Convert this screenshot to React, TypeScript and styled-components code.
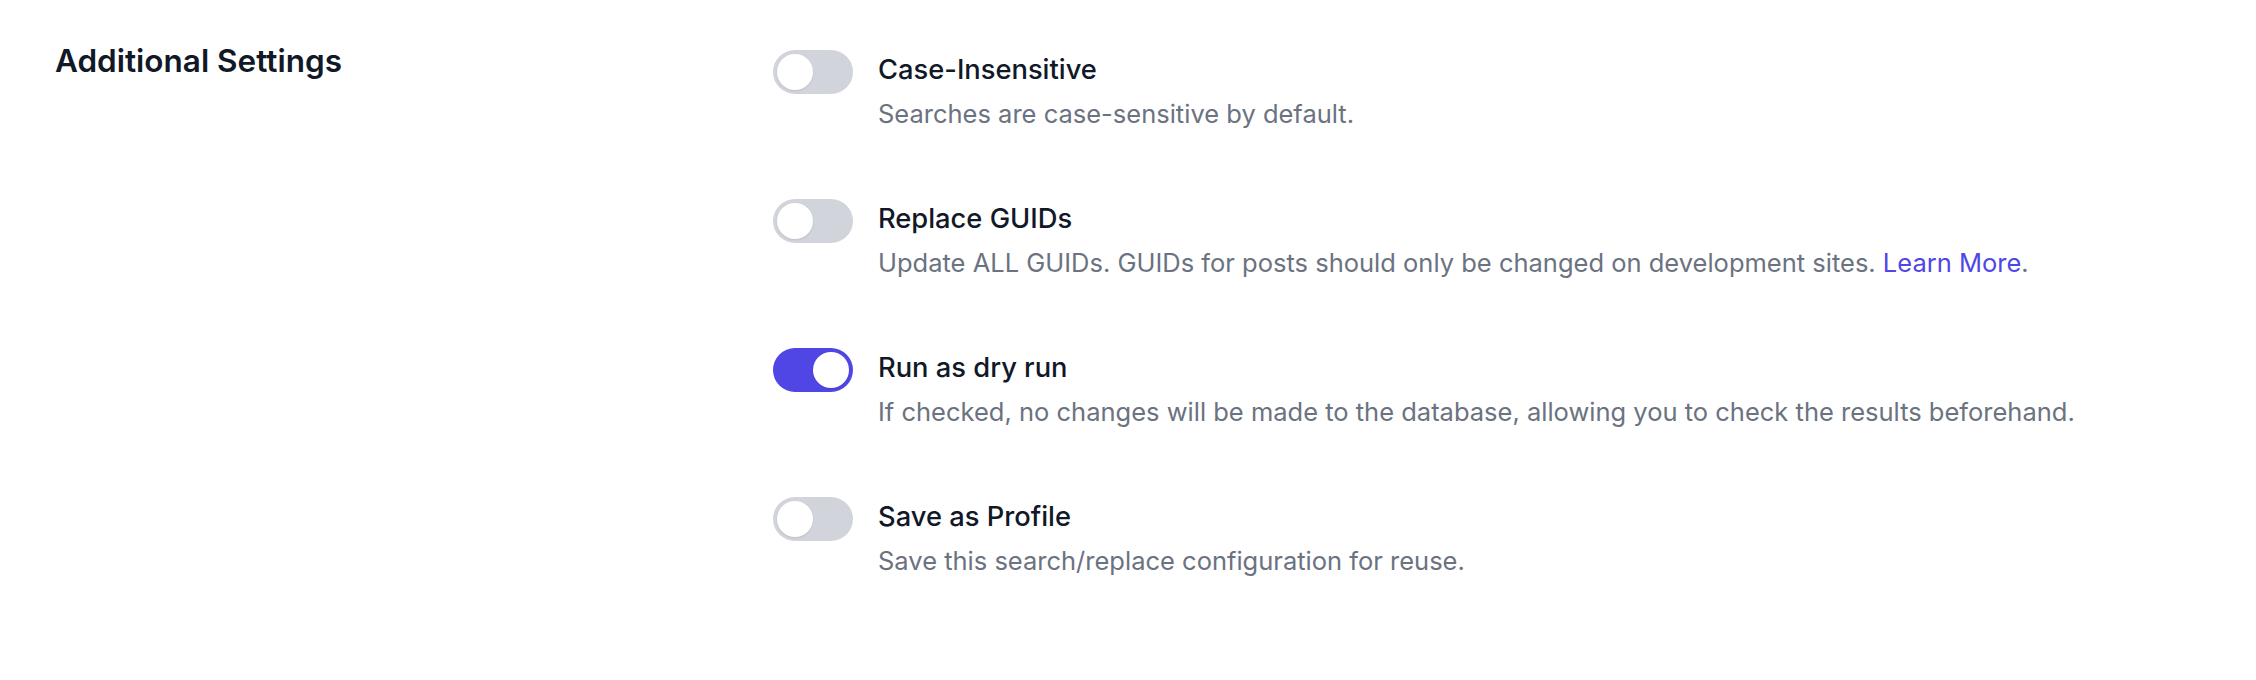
import React, { useState } from "react";
import styled, { createGlobalStyle } from "styled-components";

const GlobalStyle = createGlobalStyle`
  html, body {
    margin: 0;
    padding: 0;
    background: #ffffff;
  }
  body {
    font-family: Inter, "Noto Sans", "Liberation Sans", sans-serif;
    -webkit-font-smoothing: antialiased;
  }
`;

type Setting = {
  id: string;
  title: string;
  description: string;
  link?: string;
  enabled: boolean;
};

const initialSettings: Setting[] = [
  {
    id: "case",
    title: "Case-Insensitive",
    description: "Searches are case-sensitive by default.",
    enabled: false,
  },
  {
    id: "guids",
    title: "Replace GUIDs",
    description:
      "Update ALL GUIDs. GUIDs for posts should only be changed on development sites.",
    link: "Learn More",
    enabled: false,
  },
  {
    id: "dry",
    title: "Run as dry run",
    description:
      "If checked, no changes will be made to the database, allowing you to check the results beforehand.",
    enabled: true,
  },
  {
    id: "profile",
    title: "Save as Profile",
    description: "Save this search/replace configuration for reuse.",
    enabled: false,
  },
];

const App = () => {
  const [settings, setSettings] = useState<Setting[]>(initialSettings);

  const toggle = (id: string) => {
    setSettings((prev) =>
      prev.map((s) => (s.id === id ? { ...s, enabled: !s.enabled } : s))
    );
  };

  return (
    <>
      <GlobalStyle />
      <Section>
        <SectionTitle>Additional Settings</SectionTitle>
        <SettingsList>
          {settings.map((setting) => (
            <SettingRow key={setting.id}>
              <Switch
                type="button"
                role="switch"
                aria-checked={setting.enabled}
                $on={setting.enabled}
                onClick={() => toggle(setting.id)}
              >
                <Knob $on={setting.enabled} />
              </Switch>
              <SettingText>
                <SettingTitle>{setting.title}</SettingTitle>
                <SettingDescription>
                  {setting.description}
                  {setting.link && (
                    <>
                      {" "}
                      <LearnLink href="#">{setting.link}</LearnLink>.
                    </>
                  )}
                </SettingDescription>
              </SettingText>
            </SettingRow>
          ))}
        </SettingsList>
      </Section>
    </>
  );
};

export default App;

const Section = styled.section`
  display: grid;
  grid-template-columns: 718px 1fr;
  padding: 40px 55px 60px;
`;

const SectionTitle = styled.h2`
  margin: 1px 0 0;
  font-size: 31.5px;
  line-height: 40px;
  font-weight: 600;
  color: #111827;
`;

const SettingsList = styled.div`
  display: flex;
  flex-direction: column;
  gap: 65px;
  padding-top: 10px;
`;

const SettingRow = styled.div`
  display: flex;
  align-items: flex-start;
  gap: 25px;
`;

const Switch = styled.button<{ $on: boolean }>`
  position: relative;
  flex: 0 0 auto;
  width: 80px;
  height: 44px;
  padding: 0;
  border: none;
  border-radius: 22px;
  background: ${(p) => (p.$on ? "#4f46e5" : "#d1d5db")};
  cursor: pointer;
`;

const Knob = styled.span<{ $on: boolean }>`
  position: absolute;
  top: 4px;
  left: ${(p) => (p.$on ? "40px" : "4px")};
  width: 36px;
  height: 36px;
  border-radius: 50%;
  background: #ffffff;
  box-shadow: 0 1px 2px rgba(0, 0, 0, 0.1);
`;

const SettingText = styled.div`
  display: flex;
  flex-direction: column;
`;

const SettingTitle = styled.div`
  font-size: 27.3px;
  line-height: 40px;
  font-weight: 500;
  color: #111827;
`;

const SettingDescription = styled.p`
  margin: 4px 0 0;
  font-size: 25.5px;
  line-height: 40px;
  color: #6b7280;
`;

const LearnLink = styled.a`
  color: #4f46e5;
  text-decoration: none;
`;
